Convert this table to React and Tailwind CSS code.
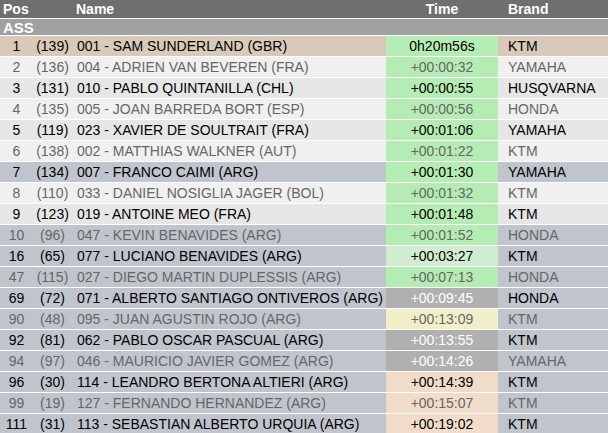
import React from 'react';

const rows = [
  { pos: '1', rank: '(139)', name: '001 - SAM SUNDERLAND (GBR)', time: '0h20m56s', brand: 'KTM', row: 'bg-[#d9c9b9]', cell: 'bg-[#b4ecb4]', dark: true },
  { pos: '2', rank: '(136)', name: '004 - ADRIEN VAN BEVEREN (FRA)', time: '+00:00:32', brand: 'YAMAHA', row: 'bg-[#f0f0f0]', cell: 'bg-[#b4ecb4]' },
  { pos: '3', rank: '(131)', name: '010 - PABLO QUINTANILLA (CHL)', time: '+00:00:55', brand: 'HUSQVARNA', row: 'bg-[#e6e6e6]', cell: 'bg-[#b4ecb4]', dark: true },
  { pos: '4', rank: '(135)', name: '005 - JOAN BARREDA BORT (ESP)', time: '+00:00:56', brand: 'HONDA', row: 'bg-[#f0f0f0]', cell: 'bg-[#b4ecb4]' },
  { pos: '5', rank: '(119)', name: '023 - XAVIER DE SOULTRAIT (FRA)', time: '+00:01:06', brand: 'YAMAHA', row: 'bg-[#e6e6e6]', cell: 'bg-[#b4ecb4]', dark: true },
  { pos: '6', rank: '(138)', name: '002 - MATTHIAS WALKNER (AUT)', time: '+00:01:22', brand: 'KTM', row: 'bg-[#f0f0f0]', cell: 'bg-[#b4ecb4]' },
  { pos: '7', rank: '(134)', name: '007 - FRANCO CAIMI (ARG)', time: '+00:01:30', brand: 'YAMAHA', row: 'bg-[#c0c5cd]', cell: 'bg-[#b4ecb4]', dark: true },
  { pos: '8', rank: '(110)', name: '033 - DANIEL NOSIGLIA JAGER (BOL)', time: '+00:01:32', brand: 'KTM', row: 'bg-[#f0f0f0]', cell: 'bg-[#b4ecb4]' },
  { pos: '9', rank: '(123)', name: '019 - ANTOINE MEO (FRA)', time: '+00:01:48', brand: 'KTM', row: 'bg-[#e6e6e6]', cell: 'bg-[#b4ecb4]', dark: true },
  { pos: '10', rank: '(96)', name: '047 - KEVIN BENAVIDES (ARG)', time: '+00:01:52', brand: 'HONDA', row: 'bg-[#c0c5cd]', cell: 'bg-[#b4ecb4]' },
  { pos: '16', rank: '(65)', name: '077 - LUCIANO BENAVIDES (ARG)', time: '+00:03:27', brand: 'KTM', row: 'bg-[#c0c5cd]', cell: 'bg-[#d2ecd2]', dark: true },
  { pos: '47', rank: '(115)', name: '027 - DIEGO MARTIN DUPLESSIS (ARG)', time: '+00:07:13', brand: 'HONDA', row: 'bg-[#c0c5cd]', cell: 'bg-[#b4ecb4]' },
  { pos: '69', rank: '(72)', name: '071 - ALBERTO SANTIAGO ONTIVEROS (ARG)', time: '+00:09:45', brand: 'HONDA', row: 'bg-[#c0c5cd]', cell: 'bg-[#b0b0b0] text-white', dark: true },
  { pos: '90', rank: '(48)', name: '095 - JUAN AGUSTIN ROJO (ARG)', time: '+00:13:09', brand: 'KTM', row: 'bg-[#c0c5cd]', cell: 'bg-[#f0f0c8]' },
  { pos: '92', rank: '(81)', name: '062 - PABLO OSCAR PASCUAL (ARG)', time: '+00:13:55', brand: 'KTM', row: 'bg-[#c0c5cd]', cell: 'bg-[#b0b0b0] text-white', dark: true },
  { pos: '94', rank: '(97)', name: '046 - MAURICIO JAVIER GOMEZ (ARG)', time: '+00:14:26', brand: 'YAMAHA', row: 'bg-[#c0c5cd]', cell: 'bg-[#b0b0b0] text-white' },
  { pos: '96', rank: '(30)', name: '114 - LEANDRO BERTONA ALTIERI (ARG)', time: '+00:14:39', brand: 'KTM', row: 'bg-[#c0c5cd]', cell: 'bg-[#f0dcc8]', dark: true },
  { pos: '99', rank: '(19)', name: '127 - FERNANDO HERNANDEZ (ARG)', time: '+00:15:07', brand: 'KTM', row: 'bg-[#c0c5cd]', cell: 'bg-[#f0dcc8]' },
  { pos: '111', rank: '(31)', name: '113 - SEBASTIAN ALBERTO URQUIA (ARG)', time: '+00:19:02', brand: 'KTM', row: 'bg-[#c0c5cd]', cell: 'bg-[#f0dcc8]', dark: true },
];

const cols = 'grid grid-cols-[33px_39px_314px_112px_110px]';

export default function App() {
  return (
    <div
      className="w-[608px] h-[433px] overflow-hidden bg-white text-[14px] leading-none"
      style={{ fontFamily: '"Liberation Sans", Arial, sans-serif' }}
    >
      <div className={`${cols} h-[19px] bg-[#6f6f6f] border-b border-white text-white font-bold items-center`}>
        <div className="pl-[3px]">Pos</div>
        <div />
        <div className="pl-[4px]">Name</div>
        <div className="text-center">Time</div>
        <div className="pl-[10px]">Brand</div>
      </div>
      <div className="h-[17px] bg-[#a0a0a0] border-b border-white text-white text-[15px] font-bold flex items-center pl-[3px]">
        ASS
      </div>
      {rows.map((r) => (
        <div
          key={r.pos}
          className={`${cols} h-[21px] border-b border-white ${r.row} ${r.dark ? 'text-black' : 'text-[#666666]'}`}
        >
          <div className="flex items-center justify-center">{r.pos}</div>
          <div className="flex items-center justify-center">{r.rank}</div>
          <div className="flex items-center pl-[5px] whitespace-nowrap">{r.name}</div>
          <div className={`flex items-center justify-center ${r.cell}`}>{r.time}</div>
          <div className="flex items-center pl-[10px]">{r.brand}</div>
        </div>
      ))}
    </div>
  );
}
